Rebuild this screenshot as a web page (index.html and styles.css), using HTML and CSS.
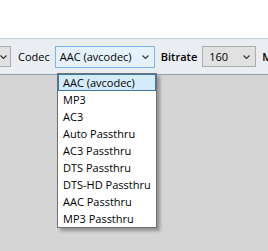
FILE: index.html
```html
<!DOCTYPE html>
<html lang="en">
<head>
    <meta charset="UTF-8">
    <title>Audio Codec</title>
    <link rel="stylesheet" href="styles.css">
</head>
<body>

    <div class="top"></div>

    <div class="toolbar">
        <div class="select cut">
            <svg class="chev" width="7" height="4" viewBox="0 0 7 4"><polyline points="0.5,0.5 3.5,3.5 6.5,0.5"/></svg>
        </div>
        <span class="label">Codec</span>
        <div class="select codec">
            <span>AAC (avcodec)</span>
            <svg class="chev" width="7" height="4" viewBox="0 0 7 4"><polyline points="0.5,0.5 3.5,3.5 6.5,0.5"/></svg>
        </div>
        <span class="label bold">Bitrate</span>
        <div class="select bitrate">
            <span>160</span>
            <svg class="chev" width="7" height="4" viewBox="0 0 7 4"><polyline points="0.5,0.5 3.5,3.5 6.5,0.5"/></svg>
        </div>
        <span class="label bold">Mixdown</span>
    </div>

    <!-- open codec dropdown -->
    <ul class="dropdown">
        <li class="selected">AAC (avcodec)</li>
        <li>MP3</li>
        <li>AC3</li>
        <li>Auto Passthru</li>
        <li>AC3 Passthru</li>
        <li>DTS Passthru</li>
        <li>DTS-HD Passthru</li>
        <li>AAC Passthru</li>
        <li>MP3 Passthru</li>
    </ul>

</body>
</html>
```

FILE: styles.css
```css
html, body {
    margin: 0;
    height: 100%;
    overflow: hidden;
}

body {
    font-family: "Open Sans", "Noto Sans", sans-serif;
    font-size: 11px;
    color: #000;
    background-color: #d4d4d4;
}

.top {
    height: 38px;
    background-color: #fff;
}

.toolbar {
    height: 35px;
    display: flex;
    align-items: center;
    white-space: nowrap;
    overflow: hidden;
    background-color: #eaeef2;
    border-top: 1px solid #c3ccd6;
    border-bottom: 1px solid #90a3b6;
}

.toolbar > * {
    flex-shrink: 0;
}

.select {
    height: 21px;
    box-sizing: border-box;
    display: flex;
    align-items: center;
    justify-content: space-between;
    padding: 0 5px;
    border: 1px solid #adadad;
    background-color: #e1e1e1;
}

.chev polyline {
    fill: none;
    stroke: #333;
    stroke-width: 1.1;
}

.select.cut {
    width: 30px;
    margin-left: -19px;
    justify-content: flex-end;
    padding-right: 3px;
}

.select.codec {
    width: 100px;
    height: 22px;
    padding: 0 5px 0 4px;
    background-color: #e5f1fb;
    border-color: #7eb4ea;
}

.select.bitrate {
    width: 54px;
    padding-left: 6px;
}

.label {
    margin: 0 5px 0 7px;
}

.label.bold {
    font-weight: 600;
    margin: 0 5px 0 6px;
}

.dropdown {
    position: absolute;
    left: 57px;
    top: 73px;
    width: 100px;
    box-sizing: border-box;
    margin: 0;
    padding: 0;
    list-style: none;
    white-space: nowrap;
    background-color: #fff;
    border: 1px solid #707070;
    box-shadow: 3px 3px 3px rgba(0, 0, 0, 0.3);
}

.dropdown li {
    height: 17px;
    line-height: 17px;
    padding-left: 5px;
    box-sizing: border-box;
}

.dropdown li.selected {
    background-color: #d4ebf9;
    border: 1px solid #3d7ba8;
    padding-left: 4px;
    line-height: 15px;
}
```
